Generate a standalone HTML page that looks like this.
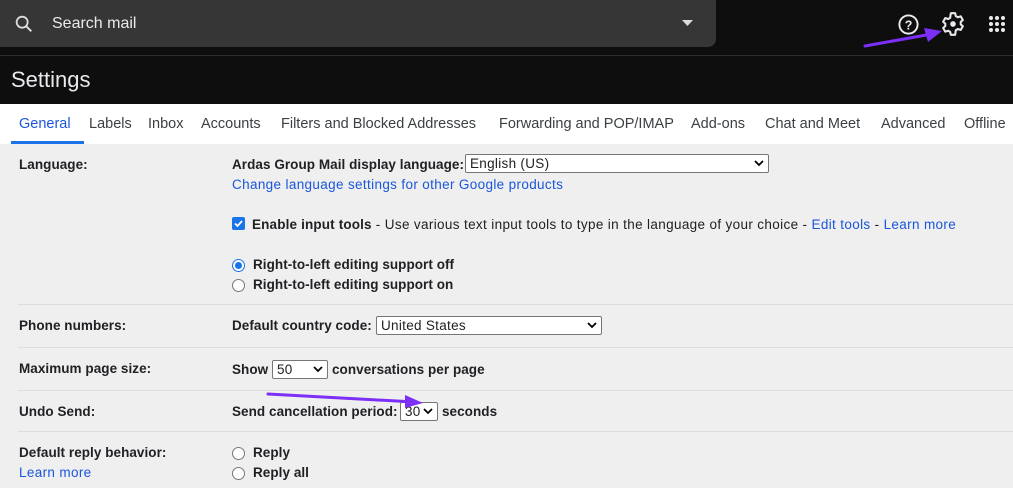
<!DOCTYPE html>
<html><head><meta charset="utf-8"><style>
*{margin:0;padding:0;box-sizing:border-box}
body{width:1013px;height:488px;overflow:hidden;background:#efefef;font-family:"Liberation Sans",Arial,sans-serif;position:relative;color:#202124}
.a{position:absolute;white-space:nowrap}
#top{position:absolute;left:0;top:0;width:1013px;height:104px;background:#0e0e0e}
#search{position:absolute;left:0;top:0;width:716px;height:47px;background:#363636;border-radius:0 0 8px 0}
#tabs{position:absolute;left:0;top:104px;width:1013px;height:40px;background:#fff}
.tab{position:absolute;top:12px;font-size:14.5px;color:#3c4043}
.b{font-weight:bold;font-size:13.5px;letter-spacing:0.05px}
.t{font-size:13.5px;letter-spacing:0.35px}
.t b{letter-spacing:0.15px}
.lnk{color:#1a56db;font-size:13.5px;letter-spacing:0.35px}
.sep{position:absolute;left:18px;right:0;height:1px;background:#dcdcdc}
.sel{position:absolute;height:19px;background:#fff;border:1px solid #767676;border-radius:2px;font-size:13.5px;padding-left:4px;line-height:17px;letter-spacing:0.3px}
.sel svg{position:absolute;right:4px;top:5px}
.rad{position:absolute;width:13px;height:13px;border:1px solid #777;border-radius:50%;background:#fff}
</style></head><body>
<div id="top"></div>
<div id="search"></div>
<svg class="a" style="left:13px;top:13px" width="22" height="22" viewBox="0 0 24 24"><circle cx="10" cy="10" r="6" fill="none" stroke="#dcdcdc" stroke-width="2"/><path d="M14.5 14.5L20 20" stroke="#dcdcdc" stroke-width="2.2"/></svg>
<div class="a" style="left:52px;top:15px;font-size:16px;color:#e8eaed">Search mail</div>
<svg class="a" style="left:682px;top:20px" width="11" height="7"><path d="M0 0h11L5.5 6z" fill="#dcdcdc"/></svg>
<div class="a" style="left:0;top:55px;width:1013px;height:1px;background:#2e2e2e"></div>
<svg class="a" style="left:897px;top:13px" width="23" height="23" viewBox="0 0 24 24"><circle cx="12" cy="12" r="9.5" fill="none" stroke="#e8eaed" stroke-width="2"/><text x="12" y="17" text-anchor="middle" font-size="13" font-weight="bold" fill="#e8eaed" font-family="Liberation Sans">?</text></svg>
<svg class="a" style="left:940px;top:11px" width="26" height="26" viewBox="0 0 24 24"><path d="M10 2h4l.6 2.7 1.9 1.1 2.6-.9 2 3.4-2 1.8v2.2l2 1.8-2 3.4-2.6-.9-1.9 1.1L14 22h-4l-.6-2.7-1.9-1.1-2.6.9-2-3.4 2-1.8v-2.2l-2-1.8 2-3.4 2.6.9 1.9-1.1z" fill="none" stroke="#e8eaed" stroke-width="1.9" stroke-linejoin="round"/><circle cx="12" cy="12" r="2.6" fill="#e8eaed"/></svg>
<svg class="a" style="left:988px;top:15px" width="18" height="18"><g fill="#e8eaed"><circle cx="3" cy="3" r="2"/><circle cx="9" cy="3" r="2"/><circle cx="15" cy="3" r="2"/><circle cx="3" cy="9" r="2"/><circle cx="9" cy="9" r="2"/><circle cx="15" cy="9" r="2"/><circle cx="3" cy="15" r="2"/><circle cx="9" cy="15" r="2"/><circle cx="15" cy="15" r="2"/></g></svg>
<svg class="a" style="left:862px;top:25px" width="85" height="25"><path d="M3 21L70 9" stroke="#7b2ff7" stroke-width="3" stroke-linecap="round"/><path d="M62 3L80 6 66 17z" fill="#7b2ff7"/></svg>
<div class="a" style="left:11px;top:67px;font-size:22px;color:#e8eaed">Settings</div>
<div id="tabs">
<div class="tab" style="left:19px;color:#1a56db">General</div>
<div class="a" style="left:11px;top:37px;width:73px;height:3px;background:#1a73e8"></div>
<div class="tab" style="left:89px">Labels</div>
<div class="tab" style="left:148px">Inbox</div>
<div class="tab" style="left:201px">Accounts</div>
<div class="tab" style="left:281px">Filters and Blocked Addresses</div>
<div class="tab" style="left:499px">Forwarding and POP/IMAP</div>
<div class="tab" style="left:691px">Add-ons</div>
<div class="tab" style="left:765px">Chat and Meet</div>
<div class="tab" style="left:881px">Advanced</div>
<div class="tab" style="left:964px">Offline</div>
</div>
<div class="a b" style="left:19px;top:157px">Language:</div>
<div class="a b" style="left:232px;top:157px">Ardas Group Mail display language:</div>
<div class="sel" style="left:465px;top:154px;width:304px">English (US)<svg width="10" height="7"><path d="M1 1l4 4 4-4" stroke="#000" stroke-width="1.8" fill="none"/></svg></div>
<div class="a lnk" style="left:232px;top:177px">Change language settings for other Google products</div>
<div class="a" style="left:232px;top:217px;width:13px;height:13px;background:#1a73e8;border-radius:2px"><svg width="13" height="13"><path d="M3 6.5l2.5 2.5 4.5-5" stroke="#fff" stroke-width="1.8" fill="none"/></svg></div>
<div class="a t" style="left:252px;top:217px"><b>Enable input tools</b> - Use various text input tools to type in the language of your choice - <span class="lnk">Edit tools</span> - <span class="lnk">Learn more</span></div>
<div class="rad" style="left:232px;top:259px;border-color:#1a73e8"><div style="position:absolute;left:2px;top:2px;width:7px;height:7px;border-radius:50%;background:#1a73e8"></div></div>
<div class="a b" style="left:253px;top:257px">Right-to-left editing support off</div>
<div class="rad" style="left:232px;top:279px"></div>
<div class="a b" style="left:253px;top:277px">Right-to-left editing support on</div>
<div class="sep" style="top:304px"></div>
<div class="a b" style="left:19px;top:318px">Phone numbers:</div>
<div class="a b" style="left:232px;top:318px">Default country code:</div>
<div class="sel" style="left:376px;top:316px;width:226px">United States<svg width="10" height="7"><path d="M1 1l4 4 4-4" stroke="#000" stroke-width="1.8" fill="none"/></svg></div>
<div class="sep" style="top:347px"></div>
<div class="a b" style="left:19px;top:361px">Maximum page size:</div>
<div class="a b" style="left:232px;top:362px">Show</div>
<div class="sel" style="left:272px;top:360px;width:56px">50<svg width="10" height="7"><path d="M1 1l4 4 4-4" stroke="#000" stroke-width="1.8" fill="none"/></svg></div>
<div class="a b" style="left:332px;top:362px">conversations per page</div>
<div class="sep" style="top:390px"></div>
<div class="a b" style="left:19px;top:404px">Undo Send:</div>
<div class="a b" style="left:232px;top:404px">Send cancellation period:</div>
<div class="sel" style="left:400px;top:402px;width:38px">30<svg width="10" height="7"><path d="M1 1l4 4 4-4" stroke="#000" stroke-width="1.8" fill="none"/></svg></div>
<div class="a b" style="left:442px;top:404px">seconds</div>
<svg class="a" style="left:265px;top:390px" width="165" height="20"><path d="M3 4L150 12" stroke="#7b2ff7" stroke-width="3" stroke-linecap="round"/><path d="M140 5L158 13 140 18z" fill="#7b2ff7"/></svg>
<div class="sep" style="top:431px"></div>
<div class="a b" style="left:19px;top:445px">Default reply behavior:</div>
<div class="a lnk" style="left:19px;top:465px">Learn more</div>
<div class="rad" style="left:232px;top:447px"></div>
<div class="a b" style="left:253px;top:445px">Reply</div>
<div class="rad" style="left:232px;top:467px"></div>
<div class="a b" style="left:253px;top:465px">Reply all</div>
</body></html>
